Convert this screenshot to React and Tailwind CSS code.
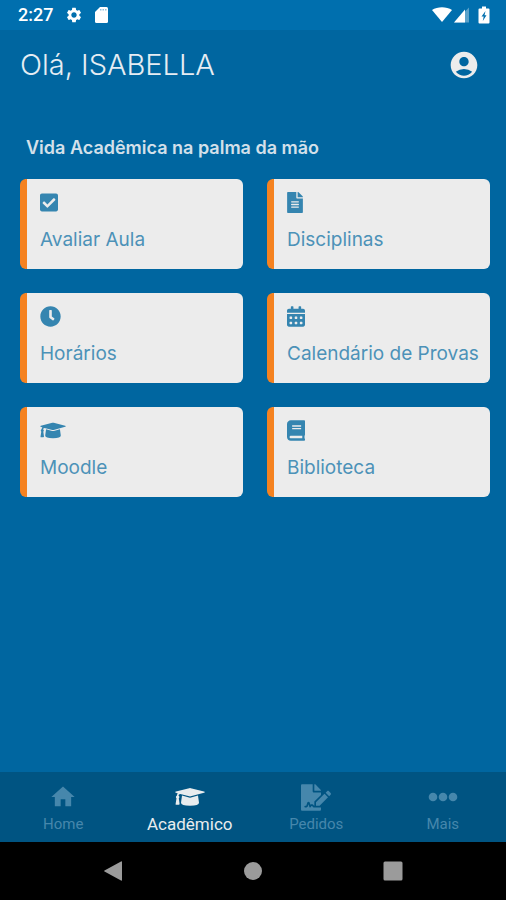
import React from "react";
import {
  FaCheckSquare,
  FaFileAlt,
  FaClock,
  FaCalendarAlt,
  FaBook,
  FaFileSignature,
} from "react-icons/fa";
import { MdAccountCircle, MdSettings, MdHome } from "react-icons/md";

function GraduationCap({ className }) {
  return (
    <svg viewBox="0 0 30 20" fill="currentColor" className={className} aria-hidden="true">
      <path d="M14.200 1.200q.8-.2 1.600 0L29 4.600q1.600.6 0 1.200L15.800 9.300q-.8.2-1.600 0L5.200 7q-1.600.3-1.700 1.700.9.500.9 1.400 0 .7-.6 1.200L4.600 17q0 .8-.8.8H1.300q-.8 0-.7-.8l.9-5.700q-.6-.5-.6-1.200 0-.9.9-1.400.1-1.500 1-2.200L1 5.800Q-.6 5.200 1 4.600z" />
      <path d="M7 8.600 14 10.500q1 .3 2 0l7-1.900 1 7.200q0 3-9 3t-9-3z" />
    </svg>
  );
}

function Dots({ className }) {
  return (
    <svg viewBox="0 0 30 30" fill="currentColor" className={className} aria-hidden="true">
      <circle cx="5" cy="15" r="4.3" />
      <circle cx="15" cy="15" r="4.3" />
      <circle cx="25" cy="15" r="4.3" />
    </svg>
  );
}

const cards = [
  { label: "Avaliar Aula", Icon: FaCheckSquare, size: "w-[18px]" },
  { label: "Disciplinas", Icon: FaFileAlt, size: "w-4" },
  { label: "Horários", Icon: FaClock, size: "w-[21px]" },
  { label: "Calendário de Provas", Icon: FaCalendarAlt, size: "w-[18px]" },
  { label: "Moodle", Icon: GraduationCap, size: "w-[26px]" },
  { label: "Biblioteca", Icon: FaBook, size: "w-[18px]" },
];

const tabs = [
  { label: "Home", Icon: MdHome, size: "h-7 w-7" },
  { label: "Acadêmico", Icon: GraduationCap, size: "h-5 w-[30px]", active: true },
  { label: "Pedidos", Icon: FaFileSignature, size: "h-[27px] w-[30px]" },
  { label: "Mais", Icon: Dots, size: "h-[30px] w-[30px]" },
];

function StatusBar() {
  return (
    <div className="flex h-[30px] items-center bg-[#006fae] pr-4 pl-[18px] text-white">
      <span className="w-[47px] font-['Roboto',sans-serif] text-lg leading-5 font-medium">2:27</span>
      <MdSettings className="h-[18px] w-[18px]" aria-hidden="true" />
      <svg viewBox="0 0 14 16" className="ml-3 h-4 w-3.5" aria-hidden="true">
        <path d="M5 0h6.500a1.500 1.500 0 0 1 1.500 1.500v13a1.500 1.500 0 0 1-1.500 1.500h-10A1.500 1.500 0 0 1 0 14.500V5z" fill="#fff" />
        <path d="M5 2h1.500v1.500H5zM7.500 2H9v1.500H7.500zM10 2h1.500v1.500H10z" fill="#8fc0dc" />
      </svg>
      <div className="ml-auto flex items-center">
        <svg viewBox="0 0 20 16" className="h-4 w-5" aria-hidden="true">
          <path d="M0 3C5.500-.8 14.500-.8 20 3L10 15z" fill="#fff" />
        </svg>
        <svg viewBox="0 0 16 16" className="ml-0.5 h-4 w-4" aria-hidden="true">
          <path d="M0 15.500 15 .5v15z" fill="#fff" opacity=".35" />
          <path d="M0 15.500 11 2.500v13z" fill="#fff" />
        </svg>
        <svg viewBox="0 0 12 18" className="ml-2 h-[18px] w-3" aria-hidden="true">
          <path d="M4 .5h4v2h2.500a1 1 0 0 1 1 1v13a1 1 0 0 1-1 1h-9a1 1 0 0 1-1-1v-13a1 1 0 0 1 1-1H4z" fill="#fff" />
          <path d="M7.500 5 3.500 10.500h2.200L4.800 15 8.500 9.200H6.500z" fill="#006fae" />
        </svg>
      </div>
    </div>
  );
}

export default function App() {
  return (
    <div className="flex min-h-screen flex-col bg-[#0066a0] font-['Inter',sans-serif]">
      <StatusBar />
      <header className="flex h-[70px] items-center justify-between pr-[26px] pl-5">
        <h1 className="text-[29px] leading-8 font-light text-[#e6edf3]">Olá, ISABELLA</h1>
        <button type="button" aria-label="Perfil" className="text-[#ececec]">
          <MdAccountCircle className="h-8 w-8" />
        </button>
      </header>

      <main className="flex-1 pt-9 pr-4 pl-5">
        <h2 className="pl-1.5 text-[18px] leading-6 font-semibold text-[#d3e0ea]">
          Vida Acadêmica na palma da mão
        </h2>
        <div className="mt-[19px] grid grid-cols-2 gap-6">
          {cards.map(({ label, Icon, size }) => (
            <button
              key={label}
              type="button"
              className="flex h-[90px] flex-col items-start rounded-md border-l-[7px] border-[#f58220] bg-[#ececec] pt-[13px] pl-[13px] text-left text-[#3585b0]"
            >
              <Icon className={`h-[21px] ${size}`} aria-hidden="true" />
              <span className="mt-[15px] text-[19px] leading-6 font-normal whitespace-nowrap text-[#4c92b8]">
                {label}
              </span>
            </button>
          ))}
        </div>
      </main>

      <nav className="grid h-[70px] grid-cols-4 bg-[#005482] font-['Roboto',sans-serif]">
        {tabs.map(({ label, Icon, size, active }) => (
          <button
            key={label}
            type="button"
            className={`flex flex-col items-center pt-2.5 ${active ? "text-[#e8ecee]" : "text-[#4687ac]"}`}
          >
            <span className="flex h-[30px] items-center">
              <Icon className={size} aria-hidden="true" />
            </span>
            <span className={active ? "text-[17px] leading-6" : "text-[15px] leading-6"}>{label}</span>
          </button>
        ))}
      </nav>

      <div className="flex h-[58px] items-center justify-center gap-[120px] bg-black text-[#9b9b9b]">
        <button type="button" aria-label="Voltar">
          <svg viewBox="0 0 20 20" className="h-5 w-5" fill="currentColor" aria-hidden="true">
            <path d="M19 1v18q0 1-1 .5L1.500 10.500q-1-.5 0-1L18 .5q1-.5 1 .5z" />
          </svg>
        </button>
        <button type="button" aria-label="Início">
          <svg viewBox="0 0 20 20" className="h-5 w-5" fill="currentColor" aria-hidden="true">
            <circle cx="10" cy="10" r="9" />
          </svg>
        </button>
        <button type="button" aria-label="Recentes">
          <svg viewBox="0 0 20 20" className="h-5 w-5" fill="currentColor" aria-hidden="true">
            <rect x=".5" y=".5" width="19" height="19" rx="1.500" />
          </svg>
        </button>
      </div>
    </div>
  );
}
